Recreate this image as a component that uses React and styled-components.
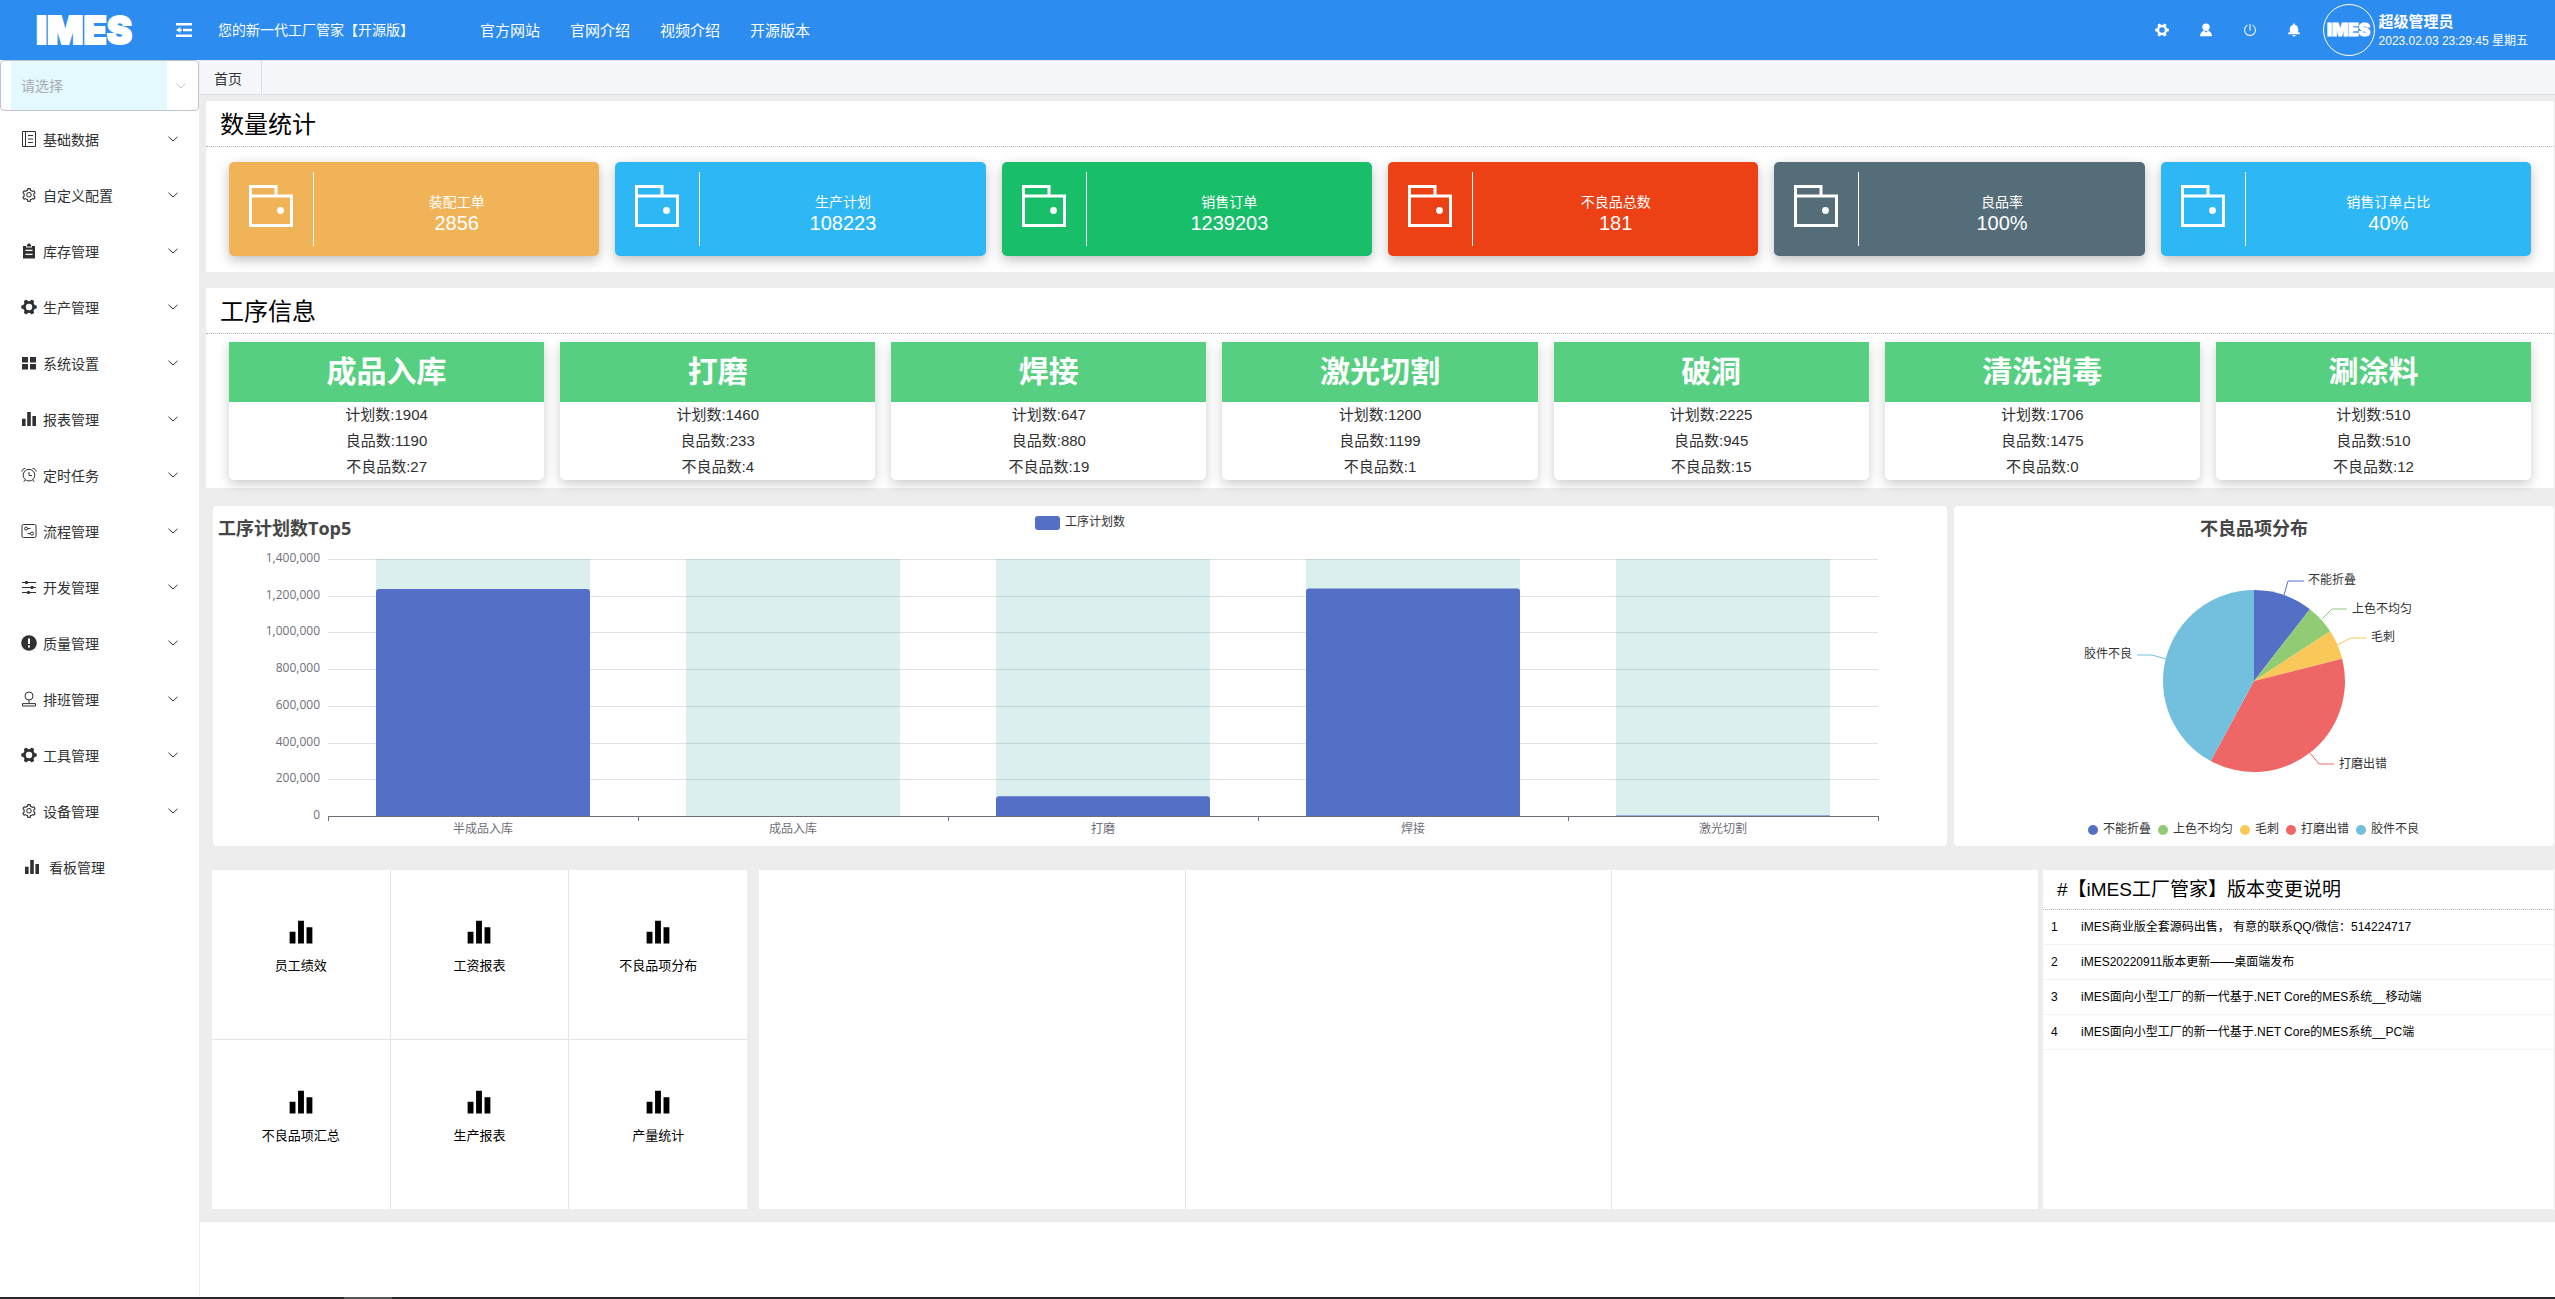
import styled, { createGlobalStyle } from "styled-components";
import { AiOutlinePoweroff, AiOutlineSetting } from "react-icons/ai";

const GlobalStyle = createGlobalStyle`
  *,
  *::before,
  *::after {
    box-sizing: border-box;
  }

  body {
    margin: 0;
    font-family: "Liberation Sans", "Noto Sans CJK SC", sans-serif;
    font-size: 14px;
    color: #303133;
    background-color: #fff;
  }

  button,
  select {
    font: inherit;
    color: inherit;
    border: none;
    background: none;
    padding: 0;
    margin: 0;
  }

  button {
    cursor: pointer;
  }

  h1, h2, h3, p, ul, ol {
    margin: 0;
    padding: 0;
    font-weight: 400;
    list-style: none;
  }

  svg {
    display: block;
    flex-shrink: 0;
  }
`;

/* ---------- data ---------- */

const navLinks = ["官方网站", "官网介绍", "视频介绍", "开源版本"];

const menuItems = [
  { label: "基础数据", icon: "notebook" },
  { label: "自定义配置", icon: "setting" },
  { label: "库存管理", icon: "order" },
  { label: "生产管理", icon: "tools" },
  { label: "系统设置", icon: "grid" },
  { label: "报表管理", icon: "data" },
  { label: "定时任务", icon: "alarm" },
  { label: "流程管理", icon: "flow" },
  { label: "开发管理", icon: "operation" },
  { label: "质量管理", icon: "warning" },
  { label: "排班管理", icon: "stamp" },
  { label: "工具管理", icon: "tools" },
  { label: "设备管理", icon: "setting" },
  { label: "看板管理", icon: "data", leaf: true },
];

const stats = [
  { label: "装配工单", value: "2856", color: "#f0b357" },
  { label: "生产计划", value: "108223", color: "#2db7f5" },
  { label: "销售订单", value: "1239203", color: "#19be6b" },
  { label: "不良品总数", value: "181", color: "#ed4014" },
  { label: "良品率", value: "100%", color: "#556d78" },
  { label: "销售订单占比", value: "40%", color: "#2db7f5" },
];

const processes = [
  { name: "成品入库", plan: 1904, good: 1190, bad: 27 },
  { name: "打磨", plan: 1460, good: 233, bad: 4 },
  { name: "焊接", plan: 647, good: 880, bad: 19 },
  { name: "激光切割", plan: 1200, good: 1199, bad: 1 },
  { name: "破洞", plan: 2225, good: 945, bad: 15 },
  { name: "清洗消毒", plan: 1706, good: 1475, bad: 0 },
  { name: "涮涂料", plan: 510, good: 510, bad: 12 },
];

const bars = [
  { name: "半成品入库", value: 1236000 },
  { name: "成品入库", value: 0 },
  { name: "打磨", value: 108223 },
  { name: "焊接", value: 1239203 },
  { name: "激光切割", value: 2856 },
];

const slices = [
  {
    name: "不能折叠",
    value: 2,
    color: "#5470c6",
    line: "330,89 334,75 350,75",
    x: 354,
    y: 74,
    legend: 139,
  },
  {
    name: "上色不均匀",
    value: 1,
    color: "#91cc75",
    line: "368,113 378,103 393,103",
    x: 398,
    y: 103,
    legend: 209,
  },
  {
    name: "毛刺",
    value: 1,
    color: "#fac858",
    line: "383,139 397,132 412,132",
    x: 417,
    y: 131,
    legend: 291,
  },
  {
    name: "打磨出错",
    value: 7,
    color: "#ee6666",
    line: "356,247 365,258 380,258",
    x: 385,
    y: 258,
    legend: 337,
  },
  {
    name: "胶件不良",
    value: 8,
    color: "#73c0de",
    line: "212,153 198,149 183,149",
    x: 178,
    y: 148,
    anchor: "end",
    legend: 407,
  },
];

const shortcuts = [
  "员工绩效",
  "工资报表",
  "不良品项分布",
  "不良品项汇总",
  "生产报表",
  "产量统计",
];

const changelog = [
  "iMES商业版全套源码出售， 有意的联系QQ/微信：514224717",
  "iMES20220911版本更新——桌面端发布",
  "iMES面向小型工厂的新一代基于.NET Core的MES系统__移动端",
  "iMES面向小型工厂的新一代基于.NET Core的MES系统__PC端",
];

/* ---------- icons ---------- */

function Gear({ size = 16 }) {
  return (
    <svg width={size} height={size} viewBox="0 0 16 16" fill="currentColor">
      <circle
        cx="8"
        cy="8"
        r="4.6"
        fill="none"
        stroke="currentColor"
        strokeWidth="2.8"
      />
      {[0, 60, 120, 180, 240, 300].map((deg) => (
        <path
          key={deg}
          d="M12.6 6.2h2.3q.8 0 .8.8v2q0 .8-.8.8h-2.3z"
          transform={`rotate(${deg} 8 8)`}
        />
      ))}
    </svg>
  );
}

function DataBars({ size = 16 }) {
  return (
    <svg width={size} height={size} viewBox="0 0 16 16" fill="currentColor">
      <path d="M1 7.8h3.6v7.2H1zM6.2 1h3.6v14H6.200zM11.400 5H15v10h-3.600z" />
    </svg>
  );
}

function Outline({ children }) {
  return (
    <svg
      width="16"
      height="16"
      viewBox="0 0 16 16"
      fill="none"
      stroke="currentColor"
    >
      {children}
    </svg>
  );
}

function MenuIcon({ name }) {
  switch (name) {
    case "notebook":
      return (
        <Outline>
          <path d="M1.5 .5h13v15h-13zM4.5 .5v15M7 4.500h5M7 8h5M7 11.500h5" />
        </Outline>
      );
    case "setting":
      return <AiOutlineSetting size={16} />;
    case "order":
      return (
        <svg width="16" height="16" viewBox="0 0 16 16" fill="currentColor">
          <path d="M2 3h3v1.4h6V3h3v12.5H2z" />
          <path d="M5.8 1.6h1.2V.6h2v1h1.2v2H5.8z" />
          <path d="M4.5 7.4h7M4.5 11.4h7" stroke="#fff" strokeWidth="1.3" />
        </svg>
      );
    case "tools":
      return <Gear />;
    case "grid":
      return (
        <svg width="16" height="16" viewBox="0 0 16 16" fill="currentColor">
          <path d="M1 2h6v5.4H1zM9 2h6v5.4H9zM1 9h6v5.4H1zM9 9h6v5.4H9z" />
        </svg>
      );
    case "data":
      return <DataBars />;
    case "alarm":
      return (
        <Outline>
          <circle cx="8" cy="8.2" r="5.8" />
          <path d="M8 5v3.6h3M.8 4.6C1 2.6 2.4 1.6 4.4 1.5M15.2 4.6C15 2.6 13.6 1.6 11.6 1.5M4 13l-1.2 1.8M12 13l1.2 1.8" />
        </Outline>
      );
    case "flow":
      return (
        <Outline>
          <rect x="1" y="1.5" width="14" height="13" rx="1.5" />
          <circle cx="5" cy="5.6" r="1.5" />
          <circle cx="11" cy="10.6" r="1.5" />
          <path d="M6.5 5.6h3M6.5 10.6h3" />
        </Outline>
      );
    case "operation":
      return (
        <Outline>
          <path d="M1 3.5h14M1 8.5h14M1 13.5h14" />
          <path d="M5.5 2v3M11 7v3M7.5 12v3" strokeWidth="2.4" />
        </Outline>
      );
    case "warning":
      return (
        <svg width="16" height="16" viewBox="0 0 16 16" fill="currentColor">
          <circle cx="8" cy="8" r="7.8" />
          <path d="M7 3.6h2v5.4H7zM7 10.6h2v2H7z" fill="#fff" />
        </svg>
      );
    default:
      return (
        <Outline>
          <circle cx="8" cy="5" r="4" />
          <path d="M8 9v3.4M1.5 15v-2.400h13V15z" />
        </Outline>
      );
  }
}

function Chevron() {
  return (
    <svg
      width="10"
      height="6"
      viewBox="0 0 10 6"
      fill="none"
      stroke="currentColor"
    >
      <path d="M.5.8 5 5 9.5.8" />
    </svg>
  );
}

function FoldIcon() {
  return (
    <svg width="16" height="14" viewBox="0 0 16 14" fill="currentColor">
      <path d="M0 0h16v2.4H0zM7 5.8h9v2.4H7zM0 11.6h16V14H0zM0 7l4.4-3v2.2H6v1.6H4.4V10z" />
    </svg>
  );
}

function UserIcon() {
  return (
    <svg width="14" height="14" viewBox="0 0 14 14" fill="currentColor">
      <circle cx="7" cy="4.2" r="3.7" />
      <path d="M1 13.2C1 10 3 8.3 5 7.8L7 9.6l2-1.8c2 .5 4 2.2 4 5.4z" />
    </svg>
  );
}

function BellIcon() {
  return (
    <svg width="14" height="14" viewBox="0 0 14 14" fill="currentColor">
      <path d="M6.2.6h1.6v1.1c2 .4 3.4 2 3.4 4.1v3.8h1.6v1.6H1.2V9.6h1.6V5.8c0-2.1 1.4-3.7 3.4-4.1zM5.4 12h3.2a1.6 1.6 0 0 1-3.2 0z" />
    </svg>
  );
}

function WalletIcon() {
  return (
    <svg
      width="44"
      height="42"
      viewBox="0 0 44 42"
      fill="none"
      stroke="currentColor"
      strokeWidth="3"
    >
      <path d="M1.5 1.5H27V11h15.5v29.5h-41zM1.5 11H28" />
      <circle cx="31.5" cy="25.5" r="3.4" fill="currentColor" stroke="none" />
    </svg>
  );
}

/* ---------- header ---------- */

const Page = styled.div`
  display: flex;
  flex-direction: column;
  min-height: 100vh;
`;

const Header = styled.header`
  display: flex;
  align-items: center;
  height: 60px;
  padding-right: 27px;
  color: #fff;
  background-color: #2d8cf0;
`;

const Logo = styled.div`
  width: 176px;
  padding-left: 36px;
  font-family: Inter, sans-serif;
  font-size: 38px;
  font-weight: 900;
  line-height: 60px;
  -webkit-text-stroke: 2px #fff;
`;

const Slogan = styled.div`
  margin-left: 28px;
  padding-bottom: 2px;
`;

const Nav = styled.nav`
  display: flex;
  gap: 30px;
  margin-left: 66px;
  margin-right: auto;
  padding-bottom: 2px;
`;

const NavLink = styled.a`
  font-size: 15px;
  color: inherit;
  text-decoration: none;
`;

const Tools = styled.div`
  display: flex;
  gap: 30px;
  margin-right: 22px;
`;

const ToolButton = styled.button`
  display: grid;
  place-items: center;
  width: 14px;
  height: 20px;
`;

const Avatar = styled.div`
  display: grid;
  place-items: center;
  width: 52px;
  height: 52px;
  border: 1px solid #fff;
  border-radius: 50%;
  font-family: Inter, sans-serif;
  font-size: 17px;
  font-weight: 900;
  -webkit-text-stroke: 1px #fff;
`;

const User = styled.div`
  margin-left: 4px;
  padding-top: 4px;
  font-size: 12px;
  line-height: 20px;
`;

const UserName = styled.div`
  font-size: 15px;
  font-weight: 700;
  line-height: 18px;
`;

/* ---------- sidebar ---------- */

const Body = styled.div`
  display: flex;
  flex: 1;
`;

const Sidebar = styled.aside`
  width: 200px;
  flex-shrink: 0;
  border-right: 1px solid #eee;
`;

const SelectBox = styled.div`
  display: flex;
  align-items: center;
  height: 51px;
  padding: 0 12px 0 10px;
  border: 1px solid #c0c4cc;
  border-radius: 4px;
  color: #c0c4cc;
`;

const Select = styled.select`
  appearance: none;
  width: 156px;
  height: 49px;
  margin-right: auto;
  padding-left: 10px;
  color: #a8abb2;
  background-color: #e3f9fd;
`;

const Menu = styled.ul`
  display: flex;
  flex-direction: column;
`;

const MenuButton = styled.button`
  display: flex;
  align-items: center;
  gap: ${(props) => (props.$leaf ? 9 : 6)}px;
  width: 100%;
  height: 56px;
  padding: 0 21px;
  padding-left: ${(props) => (props.$leaf ? 24 : 21)}px;

  & > span {
    margin-right: auto;
  }
`;

/* ---------- content ---------- */

const Main = styled.main`
  flex: 1;
  min-width: 0;
`;

const Tabs = styled.div`
  display: flex;
  height: 35px;
  border-top: 1px solid #e4e7ed;
  border-bottom: 1px solid #dcdfe6;
  background-color: #f5f7fa;
`;

const Tab = styled.button`
  padding: 0 19px 0 14px;
  border-right: 1px solid #dcdfe6;
`;

const Content = styled.div`
  padding: 6px 1px 13px 6px;
  background-color: #ededed;
`;

const Card = styled.section`
  margin-bottom: ${(props) => props.$gap}px;
  background-color: #fff;
`;

const CardTitle = styled.h2`
  height: 46px;
  padding-left: 14px;
  border-bottom: 1px dotted #b5b5b5;
  font-size: 24px;
  line-height: 48px;
  color: #000;
`;

const StatRow = styled.div`
  display: grid;
  grid-template-columns: repeat(6, 1fr);
  gap: 16px;
  padding: 15px 23px 16px;
`;

const Stat = styled.div`
  display: flex;
  align-items: center;
  height: 94px;
  padding: 10px 0 10px 20px;
  border-radius: 5px;
  color: #fff;
  background-color: ${(props) => props.$color};
  box-shadow: 0 4px 12px rgba(0, 0, 0, 0.25);

  & > svg {
    margin-bottom: 6px;
  }
`;

const StatText = styled.div`
  display: flex;
  flex-direction: column;
  justify-content: center;
  flex: 1;
  height: 74px;
  margin-left: 20px;
  padding-top: 8px;
  border-left: 1px solid #fff;
  line-height: 20px;
  text-align: center;

  & > strong {
    font-size: 20px;
    font-weight: 400;
    line-height: 22px;
  }
`;

const ProcessRow = styled.div`
  display: grid;
  grid-template-columns: repeat(7, 1fr);
  gap: 16px;
  padding: 8px 23px;
`;

const Process = styled.div`
  height: 138px;
  border-radius: 0 0 5px 5px;
  font-size: 15px;
  line-height: 26px;
  text-align: center;
  background-color: #fff;
  box-shadow: 0 4px 12px rgba(0, 0, 0, 0.2);
`;

const ProcessName = styled.h3`
  height: 60px;
  font-size: 30px;
  font-weight: 700;
  line-height: 60px;
  color: #fff;
  background-color: #57cf81;
`;

const ChartRow = styled.div`
  display: grid;
  grid-template-columns: 1734fr 600fr;
  gap: 7px;
  margin: 0 0 24px 7px;
`;

const ChartPanel = styled.section`
  height: 340px;
  border-radius: 4px;
  background-color: #fff;

  & > svg {
    width: 100%;
    height: 100%;
    font-family: "Open Sans", "Noto Sans CJK SC", sans-serif;
  }
`;

const BottomRow = styled.div`
  display: grid;
  grid-template-columns: 535fr 1286fr 511fr;
  column-gap: 5px;
  height: 339px;
  margin-left: 6px;
`;

const Shortcuts = styled.div`
  display: grid;
  grid-template-columns: repeat(3, 1fr);
  grid-template-rows: repeat(2, 1fr);
  gap: 1px;
  background-color: #e4e4e4;
`;

const Shortcut = styled.button`
  display: flex;
  flex-direction: column;
  align-items: center;
  justify-content: flex-start;
  padding-top: 49px;
  font-size: 13px;
  line-height: 20px;
  color: #000;
  background-color: #fff;

  & > span {
    margin-top: 11px;
  }
`;

const Blank = styled.div`
  display: grid;
  grid-template-columns: repeat(3, 1fr);
  gap: 1px;
  margin-left: 7px;
  background-color: #e4e4e4;

  & > div {
    background-color: #fff;
  }
`;

const Changelog = styled.section`
  color: #000;
  background-color: #fff;
`;

const ChangelogTitle = styled.h2`
  height: 40px;
  padding-left: 14px;
  border-bottom: 1px dotted #b5b5b5;
  font-size: 19px;
  line-height: 40px;
`;

const ChangelogItem = styled.li`
  display: flex;
  height: 35px;
  padding-left: 8px;
  border-bottom: 1px solid #f3f3f3;
  font-size: 12px;
  line-height: 35px;

  & > span {
    width: 30px;
  }
`;

const Taskbar = styled.footer`
  height: 2px;
  background: linear-gradient(#555, #555) 344px 0 / 48px 2px no-repeat #2b282b;
`;

/* ---------- charts ---------- */

function BarChart() {
  const left = 115;
  const top = 53;
  const bottom = 310;
  const step = 310;
  const barWidth = 214;
  const max = 1400000;
  const toY = (value) => bottom - (value / max) * (bottom - top);
  const ticks = [0, 1, 2, 3, 4, 5, 6, 7].map((i) => i * 200000);

  return (
    <svg viewBox="0 0 1734 340" role="img" aria-label="工序计划数Top5">
      <text x="5" y="29" fontSize="18" fontWeight="700" fill="#464646">
        工序计划数Top5
      </text>
      <rect x="822" y="10" width="25" height="14" rx="3" fill="#5470c6" />
      <text x="852" y="20" fontSize="12" fill="#333">
        工序计划数
      </text>

      {bars.map((bar, i) => (
        <rect
          key={bar.name}
          x={left + i * step + 48}
          y={top}
          width={barWidth}
          height={bottom - top}
          fill="#dbf0ee"
        />
      ))}

      {ticks.map((tick) => (
        <g key={tick}>
          {tick > 0 && (
            <path
              d={`M${left} ${Math.round(toY(tick)) + 0.5}h${step * 5}`}
              stroke="rgba(90, 105, 130, 0.2)"
            />
          )}
          <text
            x={left - 8}
            y={toY(tick) + 3}
            fontSize="12"
            textAnchor="end"
            fill="#6e7079"
          >
            {tick.toLocaleString("en-US")}
          </text>
        </g>
      ))}

      {bars.map((bar, i) => {
        const x = left + i * step + 48;
        const y = toY(bar.value);
        const r = Math.min(3, bottom - y);
        return (
          <g key={bar.name}>
            {bar.value > 0 && (
              <path
                d={`M${x} ${bottom}V${y + r}q0-${r} ${r}-${r}h${barWidth - 2 * r}q${r} 0 ${r} ${r}V${bottom}z`}
                fill="#5470c6"
              />
            )}
            <text
              x={x + barWidth / 2}
              y="327"
              fontSize="12"
              textAnchor="middle"
              fill="#6e7079"
            >
              {bar.name}
            </text>
          </g>
        );
      })}

      <path d={`M${left} ${bottom + 0.5}h${step * 5}`} stroke="#6e7079" />
      {[0, 1, 2, 3, 4, 5].map((i) => (
        <path
          key={i}
          d={`M${left + i * step + 0.5} ${bottom}v5`}
          stroke="#6e7079"
        />
      ))}
    </svg>
  );
}

function PieChart() {
  const cx = 300;
  const cy = 175;
  const r = 91;
  const total = slices.reduce((sum, s) => sum + s.value, 0);
  const point = (value) => {
    const angle = (value / total) * Math.PI * 2;
    return `${cx + r * Math.sin(angle)} ${cy - r * Math.cos(angle)}`;
  };
  let sum = 0;

  return (
    <svg viewBox="0 0 600 340" role="img" aria-label="不良品项分布">
      <text
        x={cx}
        y="29"
        fontSize="18"
        fontWeight="700"
        textAnchor="middle"
        fill="#464646"
      >
        不良品项分布
      </text>
      {slices.map((slice) => {
        const start = point(sum);
        sum += slice.value;
        const large = slice.value > total / 2 ? 1 : 0;
        return (
          <g key={slice.name} fontSize="12" fill="#333">
            <path
              d={`M${cx} ${cy}L${start}A${r} ${r} 0 ${large} 1 ${point(sum)}z`}
              fill={slice.color}
            />
            <polyline points={slice.line} fill="none" stroke={slice.color} />
            <text x={slice.x} y={slice.y + 4} textAnchor={slice.anchor}>
              {slice.name}
            </text>
            <circle cx={slice.legend} cy="324" r="5" fill={slice.color} />
            <text x={slice.legend + 10} y="327">
              {slice.name}
            </text>
          </g>
        );
      })}
    </svg>
  );
}

/* ---------- page ---------- */

function App() {
  return (
    <>
      <GlobalStyle />
      <Page>
        <Header>
          <Logo>IMES</Logo>
          <ToolButton aria-label="收起菜单">
            <FoldIcon />
          </ToolButton>
          <Slogan>您的新一代工厂管家【开源版】</Slogan>
          <Nav>
            {navLinks.map((link) => (
              <NavLink key={link} href="#">
                {link}
              </NavLink>
            ))}
          </Nav>
          <Tools>
            <ToolButton aria-label="设置">
              <Gear size={14} />
            </ToolButton>
            <ToolButton aria-label="个人中心">
              <UserIcon />
            </ToolButton>
            <ToolButton aria-label="退出">
              <AiOutlinePoweroff size={14} />
            </ToolButton>
            <ToolButton aria-label="消息">
              <BellIcon />
            </ToolButton>
          </Tools>
          <Avatar>IMES</Avatar>
          <User>
            <UserName>超级管理员</UserName>
            <div>2023.02.03 23:29:45 星期五</div>
          </User>
        </Header>

        <Body>
          <Sidebar>
            <SelectBox>
              <Select aria-label="请选择" defaultValue="">
                <option value="">请选择</option>
              </Select>
              <Chevron />
            </SelectBox>
            <Menu>
              {menuItems.map((item) => (
                <li key={item.label}>
                  <MenuButton $leaf={item.leaf}>
                    <MenuIcon name={item.icon} />
                    <span>{item.label}</span>
                    {!item.leaf && <Chevron />}
                  </MenuButton>
                </li>
              ))}
            </Menu>
          </Sidebar>

          <Main>
            <Tabs>
              <Tab>首页</Tab>
            </Tabs>
            <Content>
              <Card $gap={16}>
                <CardTitle>数量统计</CardTitle>
                <StatRow>
                  {stats.map((stat) => (
                    <Stat key={stat.label} $color={stat.color}>
                      <WalletIcon />
                      <StatText>
                        <span>{stat.label}</span>
                        <strong>{stat.value}</strong>
                      </StatText>
                    </Stat>
                  ))}
                </StatRow>
              </Card>

              <Card $gap={18}>
                <CardTitle>工序信息</CardTitle>
                <ProcessRow>
                  {processes.map((item) => (
                    <Process key={item.name}>
                      <ProcessName>{item.name}</ProcessName>
                      <p>计划数:{item.plan}</p>
                      <p>良品数:{item.good}</p>
                      <p>不良品数:{item.bad}</p>
                    </Process>
                  ))}
                </ProcessRow>
              </Card>

              <ChartRow>
                <ChartPanel>
                  <BarChart />
                </ChartPanel>
                <ChartPanel>
                  <PieChart />
                </ChartPanel>
              </ChartRow>

              <BottomRow>
                <Shortcuts>
                  {shortcuts.map((name) => (
                    <Shortcut key={name}>
                      <DataBars size={26} />
                      <span>{name}</span>
                    </Shortcut>
                  ))}
                </Shortcuts>
                <Blank>
                  <div />
                  <div />
                  <div />
                </Blank>
                <Changelog>
                  <ChangelogTitle>#【iMES工厂管家】版本变更说明</ChangelogTitle>
                  <ol>
                    {changelog.map((text, i) => (
                      <ChangelogItem key={text}>
                        <span>{i + 1}</span>
                        {text}
                      </ChangelogItem>
                    ))}
                  </ol>
                </Changelog>
              </BottomRow>
            </Content>
          </Main>
        </Body>
        <Taskbar />
      </Page>
    </>
  );
}

export default App;
